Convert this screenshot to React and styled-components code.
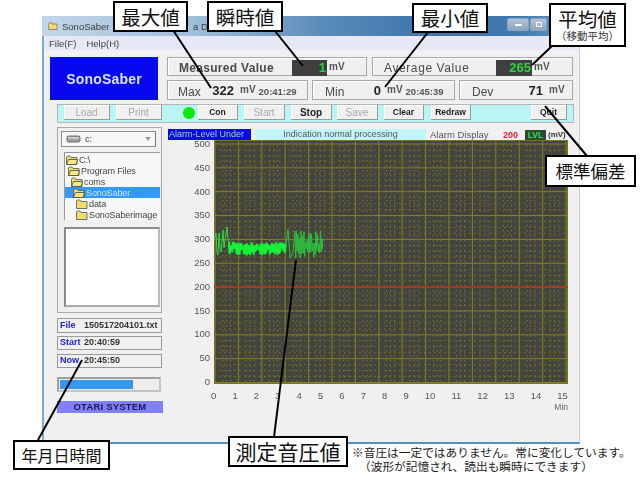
import React from "react";
import styled, { createGlobalStyle } from "styled-components";

const Global = createGlobalStyle`
  html, body { margin: 0; padding: 0; background: #fff; }
  body { font-family: "Liberation Sans", Arial, sans-serif; }
  #root { width: 640px; height: 480px; overflow: hidden; }
`;

const Page = styled.div`
  position: relative;
  width: 640px;
  height: 480px;
  padding-top: 16px;
  box-sizing: border-box;
  overflow: hidden;
`;

const Win = styled.div`
  margin-left: 42px;
  width: 538px;
  height: 428px;
  box-sizing: border-box;
  border-left: 2px solid #7fabc9;
  border-right: 1px solid #b8d0e2;
  border-bottom: 2px solid #4f93c6;
  background: #f0f0f0;
  display: flex;
  flex-direction: column;
  filter: blur(0.5px);
`;

const TitleBar = styled.div`
  height: 20px;
  margin: 0 -1px 0 -2px;
  padding: 0 33px 0 5px;
  display: flex;
  align-items: center;
  background: linear-gradient(90deg, #c3d6e8 0%, #a0bfdb 28%, #5a8cba 52%, #3f78ae 70%, #3f78ae 88%, #6f9dc2 100%);
  font-size: 9.5px;
  color: #3b3b3b;
`;

const TitleIcon = styled.span`
  width: 12px;
  margin-right: 3px;
  line-height: 0;
  transform: scale(0.8);
`;

const TitleText = styled.span`
  width: ${p => p.$w}px;
  white-space: nowrap;
  flex: ${p => (p.$w ? "none" : 1)};
`;

const WinBtn = styled.div`
  width: ${p => (p.$max ? "17px" : "22px")};
  height: 13px;
  margin-top: -3px;
  margin-left: ${p => (p.$max ? "1px" : "0")};
  border: 1px solid #8fa6bf;
  border-radius: 2px;
  box-sizing: border-box;
  background: linear-gradient(#b4c4d6, #8ba5c0);
  display: flex;
  align-items: center;
  justify-content: center;
  &::after {
    content: "";
    width: ${p => (p.$max ? "6px" : "7px")};
    height: ${p => (p.$max ? "5px" : "2px")};
    border: 1px solid #fff;
    box-sizing: border-box;
    background: ${p => (p.$max ? "transparent" : "#fff")};
  }
`;

const Menu = styled.div`
  height: 14px;
  padding-left: 5px;
  display: flex;
  align-items: center;
  gap: 10px;
  background: #e6e8f6;
  font-size: 9.5px;
  color: #444;
`;

const Client = styled.div`
  flex: 1;
  padding: 7px 5px 0 13px;
  display: flex;
  flex-direction: column;
`;

const Header = styled.div`
  margin-left: -7px;
  display: flex;
  gap: 9px;
`;

const Logo = styled.div`
  flex: none;
  width: 108px;
  height: 43px;
  background: #0808f0;
  color: #d8e4f8;
  font-size: 14px;
  font-weight: bold;
  letter-spacing: 0.2px;
  display: flex;
  align-items: center;
  justify-content: center;
`;

const Readouts = styled.div`
  flex: 1;
  display: flex;
  flex-direction: column;
  gap: 4px;
`;

const ReadRow = styled.div`
  display: flex;
  gap: ${p => p.$gap}px;
`;

const Panel = styled.div`
  flex: none;
  width: ${p => p.$w}px;
  height: ${p => p.$h}px;
  box-sizing: border-box;
  border: 1px solid #a8a8a8;
  box-shadow: inset 1px 1px 0 #fff;
  padding-left: ${p => p.$pad || 11}px;
  display: flex;
  align-items: center;
  color: #444;
  white-space: nowrap;
`;

const PanelLabel = styled.span`
  flex: none;
  width: ${p => p.$w}px;
  font-size: 12px;
  letter-spacing: ${p => p.$ls ?? 0.6}px;
  color: #4a4a4a;
  padding-top: 3px;
  font-weight: ${p => (p.$bold ? "bold" : "normal")};
`;

const LedBox = styled.span`
  width: ${p => p.$w}px;
  height: 16px;
  margin-top: 2px;
  background: #3f3f3f;
  color: #25d83a;
  font-size: 13px;
  font-weight: bold;
  text-align: right;
  line-height: 16px;
  padding-right: 1px;
`;

const Unit = styled.span`
  font-size: 10px;
  color: #555;
  margin-left: ${p => p.$ml || 2}px;
  font-weight: bold;
  margin-top: ${p => (p.$raised ? -2 : 0)}px;
`;

const BigNum = styled.span`
  flex: none;
  width: ${p => p.$w}px;
  text-align: right;
  font-size: 13px;
  font-weight: bold;
  color: #222;
`;

const Stamp = styled.span`
  font-size: 9.5px;
  margin-left: ${p => p.$ml || 4}px;
  font-weight: bold;
  color: #555;
  padding-top: 3px;
`;

const Toolbar = styled.div`
  margin-top: 4px;
  height: 19px;
  box-sizing: border-box;
  border: 1px solid #b5b5b5;
  background: #b9f5f5;
  padding: 0 0 0 6px;
  display: flex;
  align-items: flex-start;
`;

const Btn = styled.div`
  flex: none;
  width: ${p => p.$w}px;
  margin-left: ${p => p.$ml || 0}px;
  height: 15px;
  box-sizing: border-box;
  background: #f0f0f0;
  border-right: 1px solid #9a9a9a;
  border-bottom: 1px solid #9a9a9a;
  box-shadow: inset 1px 1px 0 #fff;
  font-size: ${p => (p.$small ? 8.5 : 10)}px;
  font-weight: ${p => (p.$on ? "bold" : "normal")};
  color: ${p => (p.$on ? "#222" : "#aaa")};
  display: flex;
  align-items: center;
  justify-content: center;
`;

const Lamp = styled.div`
  flex: none;
  width: 12px;
  height: 12px;
  margin: 2px 0 0 21px;
  border-radius: 50%;
  background: #0ee80e;
`;

const Main = styled.div`
  margin-top: 4px;
  display: flex;
  gap: 6px;
`;

const Side = styled.div`
  flex: none;
  width: 105px;
  display: flex;
  flex-direction: column;
`;

const TreeGroup = styled.div`
  height: 186px;
  box-sizing: border-box;
  border: 1px solid #a8a8a8;
  padding: 3px 1px 0 3px;
  display: flex;
  flex-direction: column;
`;

const Combo = styled.div`
  width: 95px;
  height: 16px;
  box-sizing: border-box;
  background: #f7f7f7;
  border: 1px solid #8e8e8e;
  border-right-color: #777;
  padding: 0 4px;
  display: flex;
  align-items: center;
  gap: 3px;
  font-size: 9px;
  color: #333;
`;

const ComboArrow = styled.span`
  margin-left: auto;
  width: 0;
  height: 0;
  border-left: 3px solid transparent;
  border-right: 3px solid transparent;
  border-top: 4px solid #999;
`;

const Tree = styled.div`
  margin: 5px 0 0 3px;
  height: 68px;
  box-sizing: border-box;
  border-left: 1px solid #999;
  border-top: 1px solid #999;
  background: #f7f7f7;
  padding-top: 1px;
  display: flex;
  flex-direction: column;
`;

const Node = styled.div`
  height: 11px;
  padding-left: ${p => p.$indent}px;
  display: flex;
  align-items: center;
  gap: 1px;
  font-size: 9px;
  letter-spacing: -0.1px;
  white-space: nowrap;
  color: ${p => (p.$sel ? "#cfe6ff" : "#444")};
  background: ${p => (p.$sel ? "#3399ff" : "transparent")};
`;

const FileList = styled.div`
  margin: 7px 0 0 3px;
  width: 96px;
  height: 80px;
  box-sizing: border-box;
  border: 2px solid #8a8a8a;
  border-right-color: #bbb;
  border-bottom-color: #aaa;
  background: #fff;
`;

const InfoBox = styled.div`
  margin-top: ${p => p.$mt}px;
  height: ${p => p.$h}px;
  box-sizing: border-box;
  border: 1px solid #9a9a9a;
  padding: 0 0 2px 2px;
  display: flex;
  align-items: center;
  font-size: 9px;
  font-weight: bold;
  color: #333;
  white-space: nowrap;
`;

const InfoKey = styled.span`
  width: ${p => p.$w}px;
  color: #1a1ae6;
`;

const Progress = styled.div`
  margin-top: 9px;
  width: 104px;
  height: 15px;
  box-sizing: border-box;
  border: 2px solid #a0a0a0;
  border-right-color: #c4c4c4;
  border-bottom-color: #c4c4c4;
  background: #eee;
  padding: 1px;
`;

const ProgressFill = styled.div`
  height: 100%;
  background: #3399ee;
`;

const Brand = styled.div`
  margin-top: 9px;
  height: 12px;
  width: 106px;
  background: #8080f8;
  color: #1a1a50;
  font-size: 9.5px;
  font-weight: bold;
  letter-spacing: 0.2px;
  text-align: center;
  line-height: 12px;
`;

const ChartArea = styled.div`
  flex: 1;
  display: flex;
  flex-direction: column;
`;

const AlarmRow = styled.div`
  margin-top: 2px;
  height: 11px;
  display: flex;
  align-items: center;
  font-size: 9px;
  color: #555;
  white-space: nowrap;
`;

const AlarmBadge = styled.div`
  width: 83px;
  height: 11px;
  background: #0a0ae8;
  color: #a8c8f0;
  font-size: 9px;
  line-height: 11px;
  padding-left: 1px;
  box-sizing: border-box;
`;

const AlarmInfo = styled.div`
  width: 171px;
  margin-left: 4px;
  height: 11px;
  line-height: 11px;
  background: #c0f6f6;
  text-align: center;
  color: #555;
`;

const AlarmLabel = styled.span`
  margin-left: 4px;
  width: 73px;
  font-size: 9.5px;
`;

const AlarmValue = styled.span`
  width: 22px;
  color: #ee2020;
  font-weight: bold;
`;

const LvlTag = styled.span`
  width: 21px;
  height: 10px;
  line-height: 10px;
  background: #2e4a2e;
  color: #35e045;
  font-size: 8.5px;
  font-weight: bold;
  text-align: center;
`;

const MvTag = styled.span`
  margin-left: 2px;
  font-size: 8px;
  font-weight: bold;
  color: #333;
`;

const ChartBody = styled.div`
  margin-top: -1px;
  display: grid;
  grid-template-columns: 42px 354px;
  column-gap: 4px;
`;

const YAxis = styled.div`
  width: 42px;
  height: 250px;
  margin-top: -1px;
  display: flex;
  flex-direction: column;
  justify-content: space-between;
  align-items: flex-end;
  font-size: 9.5px;
  line-height: 12px;
  color: #555;
`;

const Plot = styled.div`
  height: 244px;
  margin-top: 1px;
  line-height: 0;
`;

const XAxis = styled.div`
  grid-column: 2;
  margin: 2px 0 0 -3px;
  width: 357px;
  display: flex;
  justify-content: space-between;
  font-size: 9.5px;
  line-height: 12px;
  color: #555;
`;

const XUnit = styled.div`
  grid-column: 2;
  text-align: right;
  font-size: 8.5px;
  color: #666;
  line-height: 10px;
`;

const Note = styled.div`
  margin: 1px 0 0 352px;
  width: 285px;
  font-family: "Noto Sans CJK JP", sans-serif;
  font-size: 11.7px;
  line-height: 14px;
  color: #222;
  white-space: nowrap;
`;

const NoteLine = styled.div`
  padding-left: ${p => p.$pad || 0}px;
`;

const Leaders = styled.svg`
  position: absolute;
  left: 0;
  top: 0;
  pointer-events: none;
`;

const Callout = styled.div`
  position: absolute;
  left: ${p => p.$x}px;
  top: ${p => p.$y}px;
  width: ${p => p.$w}px;
  height: ${p => p.$h}px;
  box-sizing: border-box;
  border: 2px solid #000;
  background: #fff;
  font-family: "Noto Sans CJK JP", sans-serif;
  font-size: ${p => p.$fs}px;
  color: #111;
  display: flex;
  flex-direction: column;
  align-items: center;
  justify-content: center;
  line-height: 1;
  white-space: nowrap;
`;

const CalloutSub = styled.span`
  font-size: 10.5px;
  margin-top: 2px;
  color: #333;
`;

const Folder = ({ open }) => (
  <svg width="12" height="10" viewBox="0 0 12 10">
    <path d="M0.5 2 L0.5 9.5 L11 9.5 L11 2.5 L5 2.5 L4 1 L1.5 1 Z" fill="#f2dc6a" stroke="#555" strokeWidth="0.8" />
    {open && <path d="M0.5 9.5 L2.5 4.5 L11.5 4.5 L10 9.5 Z" fill="#ffe880" stroke="#444" strokeWidth="0.8" />}
  </svg>
);

const Drive = () => (
  <svg width="16" height="10" viewBox="0 0 16 10">
    <rect x="1" y="2" width="13" height="6" rx="1.5" fill="#a0a0a0" stroke="#555" strokeWidth="0.8" />
    <rect x="2" y="3" width="11" height="1.6" fill="#d5d5d5" />
  </svg>
);

const W = 354;
const H = 244;
const X0 = 1;
const Y0 = 4;
const DX = 23.4;
const DY = 23.85;

function makeRandom(seed) {
  let s = seed;
  return () => {
    s = (s * 16807) % 2147483647;
    return s / 2147483647;
  };
}

const LEFT_WAVE = "0,100 2,93 3,112 4,115 5,93 6,108 7,112 9,90 10,108 11,100 13,87 14,98 15,104";

function bandWave() {
  const r = makeRandom(29);
  const pts = [];
  for (let x = 15; x <= 72; x += 0.4) {
    let y = 102 + r() * 13;
    if (x > 43 && x < 45 && r() > 0.5) y = 95;
    pts.push(`${x.toFixed(1)},${y.toFixed(1)}`);
  }
  return pts.join(" ");
}

function rightWave() {
  const r = makeRandom(53);
  const pts = ["72,104", "74,89", "76,118", "79,112"];
  for (let x = 81; x <= 108; x += 1.5) {
    pts.push(`${x.toFixed(1)},${(91 + r() * 14).toFixed(1)}`);
    pts.push(`${(x + 0.7).toFixed(1)},${(108 + r() * 10).toFixed(1)}`);
  }
  return pts.join(" ");
}

const Chart = () => {
  const majorV = Array.from({ length: 16 }, (_, i) => X0 + i * DX);
  const majorH = Array.from({ length: 11 }, (_, i) => Y0 + i * DY);
  const minorV = [];
  const minorH = [];
  for (let i = 0; i < 15; i++) for (const f of [0.33, 0.5, 0.67]) minorV.push(X0 + (i + f) * DX);
  for (let i = 0; i < 10; i++) for (const f of [0.25, 0.5, 0.75]) minorH.push(Y0 + (i + f) * DY);
  return (
    <svg width={W} height={H} viewBox={`0 0 ${W} ${H}`}>
      <rect x="0" y="0" width={W} height={H} fill="#44443f" />
      {minorV.map(x => (
        <line key={x} x1={x} x2={x} y1="0" y2={H} stroke="#7d7a25" strokeDasharray="1.5 3.5" />
      ))}
      {minorH.map(y => (
        <line key={y} x1="0" x2={W} y1={y} y2={y} stroke="#7d7a25" strokeDasharray="1.5 3.5" />
      ))}
      {majorV.map(x => (
        <line key={x} x1={x} x2={x} y1="0" y2={H} stroke="#85821f" />
      ))}
      {majorH.map(y => (
        <line key={y} x1="0" x2={W} y1={y} y2={y} stroke="#85821f" />
      ))}
      <rect x="0.5" y="0.5" width={W - 1} height={H - 1} fill="none" stroke="#77751f" />
      <line x1="0" x2={W} y1="147" y2="147" stroke="#c02a22" strokeWidth="1.5" />
      <polyline points={LEFT_WAVE} fill="none" stroke="#30d844" strokeWidth="1" />
      <polyline points={bandWave()} fill="none" stroke="#18f038" strokeWidth="2" />
      <polyline points={rightWave()} fill="none" stroke="#2cc040" strokeWidth="1" />
    </svg>
  );
};

const leaderLines = [
  [173, 30, 211, 88],
  [275, 31, 303, 66],
  [429, 31, 385, 87],
  [552, 46, 532, 65],
  [587, 156, 545, 106],
  [38, 440, 82, 360],
  [274, 437, 296, 260],
];

export default function App() {
  return (
    <Page>
      <Global />
      <Win>
        <TitleBar>
          <TitleIcon><Folder /></TitleIcon>
          <TitleText $w={131}>SonoSaber</TitleText>
          <TitleText>a D</TitleText>
          <WinBtn />
          <WinBtn $max />
        </TitleBar>
        <Menu>
          <span>File(F)</span>
          <span>Help(H)</span>
        </Menu>
        <Client>
          <Header>
            <Logo>SonoSaber</Logo>
            <Readouts>
              <ReadRow $gap={5}>
                <Panel $w={200} $h={19}>
                  <PanelLabel $w={113} $ls={0.3} $bold>Measured Value</PanelLabel>
                  <LedBox $w={34}>1</LedBox>
                  <Unit>mV</Unit>
                </Panel>
                <Panel $w={201} $h={19}>
                  <PanelLabel $w={112}>Average Value</PanelLabel>
                  <LedBox $w={35}>265</LedBox>
                  <Unit>mV</Unit>
                </Panel>
              </ReadRow>
              <ReadRow $gap={4}>
                <Panel $w={141} $h={20} $pad={10}>
                  <PanelLabel $w={18} $ls={0}>Max</PanelLabel>
                  <BigNum $w={38}>322</BigNum>
                  <Unit $ml={6} $raised>mV</Unit>
                  <Stamp $ml={3}>20:41:29</Stamp>
                </Panel>
                <Panel $w={143} $h={20} $pad={12}>
                  <PanelLabel $w={22} $ls={0}>Min</PanelLabel>
                  <BigNum $w={34}>0</BigNum>
                  <Unit $ml={6} $raised>mV</Unit>
                  <Stamp $ml={3}>20:45:39</Stamp>
                </Panel>
                <Panel $w={114} $h={20} $pad={12}>
                  <PanelLabel $w={24} $ls={0}>Dev</PanelLabel>
                  <BigNum $w={47}>71</BigNum>
                  <Unit $ml={6} $raised>mV</Unit>
                </Panel>
              </ReadRow>
            </Readouts>
          </Header>
          <Toolbar>
            <Btn $w={46}>Load</Btn>
            <Btn $w={46} $ml={6}>Print</Btn>
            <Lamp />
            <Btn $w={40} $ml={3} $on $small>Con</Btn>
            <Btn $w={41} $ml={6}>Start</Btn>
            <Btn $w={41} $ml={6} $on>Stop</Btn>
            <Btn $w={41} $ml={5}>Save</Btn>
            <Btn $w={40} $ml={6} $on $small>Clear</Btn>
            <Btn $w={40} $ml={7} $on $small>Redraw</Btn>
            <Btn $w={36} $ml={60} $on $small>Quit</Btn>
          </Toolbar>
          <Main>
            <Side>
              <TreeGroup>
                <Combo>
                  <Drive />
                  c:
                  <ComboArrow />
                </Combo>
                <Tree>
                  <Node $indent={1}><Folder open />C:\</Node>
                  <Node $indent={3}><Folder open />Program Files</Node>
                  <Node $indent={6}><Folder open />coms</Node>
                  <Node $indent={8} $sel><Folder open />SonoSaber</Node>
                  <Node $indent={11}><Folder />data</Node>
                  <Node $indent={11}><Folder />SonoSaberimage</Node>
                </Tree>
                <FileList />
              </TreeGroup>
              <InfoBox $mt={5} $h={15}>
                <InfoKey $w={24}>File</InfoKey>150517204101.txt
              </InfoBox>
              <InfoBox $mt={3} $h={14}>
                <InfoKey $w={24}>Start</InfoKey>20:40:59
              </InfoBox>
              <InfoBox $mt={4} $h={14}>
                <InfoKey $w={24}>Now</InfoKey>20:45:50
              </InfoBox>
              <Progress>
                <ProgressFill style={{ width: "74%" }} />
              </Progress>
              <Brand>OTARI SYSTEM</Brand>
            </Side>
            <ChartArea>
              <AlarmRow>
                <AlarmBadge>Alarm-Level Under</AlarmBadge>
                <AlarmInfo>Indication normal processing</AlarmInfo>
                <AlarmLabel>Alarm Display</AlarmLabel>
                <AlarmValue>200</AlarmValue>
                <LvlTag>LVL</LvlTag>
                <MvTag>(mV)</MvTag>
              </AlarmRow>
              <ChartBody>
                <YAxis>
                  {[500, 450, 400, 350, 300, 250, 200, 150, 100, 50, 0].map(v => (
                    <span key={v}>{v}</span>
                  ))}
                </YAxis>
                <Plot>
                  <Chart />
                </Plot>
                <XAxis>
                  {Array.from({ length: 16 }, (_, i) => (
                    <span key={i}>{i}</span>
                  ))}
                </XAxis>
                <XUnit>Min</XUnit>
              </ChartBody>
            </ChartArea>
          </Main>
        </Client>
      </Win>
      <Note>
        <NoteLine>※音圧は一定ではありません。常に変化しています。</NoteLine>
        <NoteLine $pad={7}>（波形が記憶され、読出も瞬時にできます）</NoteLine>
      </Note>
      <Leaders width="640" height="480" viewBox="0 0 640 480">
        {leaderLines.map(([a, b, c, d]) => (
          <line key={a} x1={a} y1={b} x2={c} y2={d} stroke="#000" strokeWidth="2" />
        ))}
      </Leaders>
      <Callout $x={113} $y={1} $w={75} $h={31} $fs={19.5}>最大値</Callout>
      <Callout $x={207} $y={1} $w={76} $h={31} $fs={19.5}>瞬時値</Callout>
      <Callout $x={412} $y={3} $w={76} $h={30} $fs={19.5}>最小値</Callout>
      <Callout $x={549} $y={3} $w={77} $h={44} $fs={19.5}>
        平均値
        <CalloutSub>（移動平均）</CalloutSub>
      </Callout>
      <Callout $x={545} $y={155} $w={91} $h={32} $fs={17.5}>標準偏差</Callout>
      <Callout $x={13} $y={440} $w={97} $h={30} $fs={16}>年月日時間</Callout>
      <Callout $x={228} $y={436} $w={120} $h={31} $fs={21}>測定音圧値</Callout>
    </Page>
  );
}
